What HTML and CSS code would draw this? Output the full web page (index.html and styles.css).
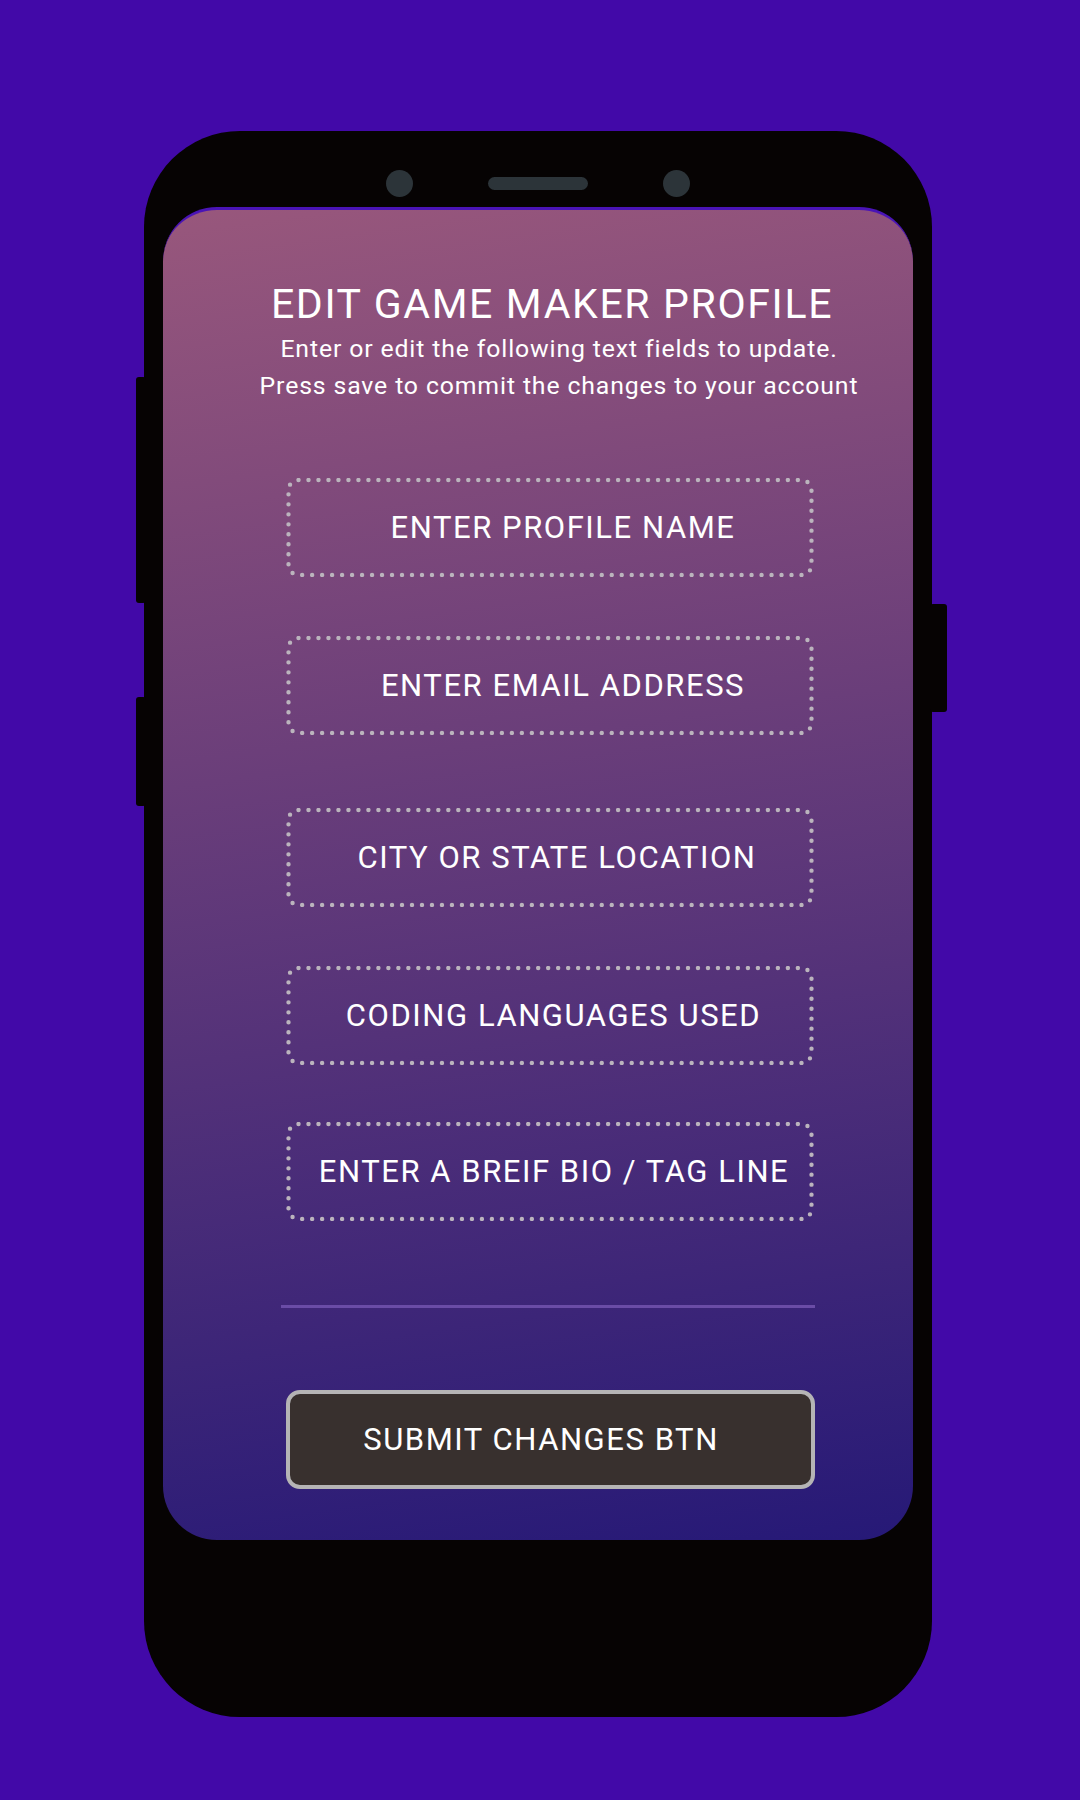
FILE: index.html
```html
<!DOCTYPE html>
<html lang="en">
<head>
<meta charset="utf-8">
<title>Edit Game Maker Profile</title>
<link rel="stylesheet" href="styles.css">
</head>
<body>
<div class="page">
  <div class="phone">
    <span class="side-btn side-btn-1"></span>
    <span class="side-btn side-btn-2"></span>
    <span class="side-btn side-btn-r"></span>
    <div class="phone-top">
      <span class="cam"></span>
      <span class="speaker"></span>
      <span class="cam"></span>
    </div>
    <div class="screen">
      <h1 class="title">EDIT GAME MAKER PROFILE</h1>
      <p class="subtitle">Enter or edit the following text fields to update.<br>Press save to commit the changes to your account</p>
      <div class="fields">
        <div class="field f1">
          <svg class="dots" viewBox="0 0 528 99" preserveAspectRatio="none"><rect x="2.5" y="2" width="523" height="95" rx="10" pathLength="1220"/></svg>
          <span>ENTER PROFILE NAME</span>
        </div>
        <div class="field f2">
          <svg class="dots" viewBox="0 0 528 99" preserveAspectRatio="none"><rect x="2.5" y="2" width="523" height="95" rx="10" pathLength="1220"/></svg>
          <span>ENTER EMAIL ADDRESS</span>
        </div>
        <div class="field f3">
          <svg class="dots" viewBox="0 0 528 99" preserveAspectRatio="none"><rect x="2.5" y="2" width="523" height="95" rx="10" pathLength="1220"/></svg>
          <span>CITY OR STATE LOCATION</span>
        </div>
        <div class="field f4">
          <svg class="dots" viewBox="0 0 528 99" preserveAspectRatio="none"><rect x="2.5" y="2" width="523" height="95" rx="10" pathLength="1220"/></svg>
          <span>CODING LANGUAGES USED</span>
        </div>
        <div class="field f5">
          <svg class="dots" viewBox="0 0 528 99" preserveAspectRatio="none"><rect x="2.5" y="2" width="523" height="95" rx="10" pathLength="1220"/></svg>
          <span>ENTER A BREIF BIO / TAG LINE</span>
        </div>
      </div>
      <div class="divider"></div>
      <button class="submit">SUBMIT CHANGES BTN</button>
    </div>
  </div>
</div>
</body>
</html>
```
FILE: styles.css
```css
html, body {
  margin: 0;
  padding: 0;
  background: #4209a8;
}

.page {
  width: 1080px;
  height: 1800px;
  padding-top: 131px;
  box-sizing: border-box;
  font-family: Roboto, "Liberation Sans", sans-serif;
}

.phone {
  position: relative;
  margin-left: 144px;
  width: 788px;
  height: 1586px;
  background: #060303;
  border-radius: 96px;
}

.side-btn {
  position: absolute;
  background: #060303;
  border-radius: 3px;
}
.side-btn-1 { left: -8px; top: 246px; width: 10px; height: 226px; }
.side-btn-2 { left: -8px; top: 566px; width: 10px; height: 109px; }
.side-btn-r { right: -15px; top: 473px; width: 17px; height: 108px; }

.phone-top {
  height: 76px;
  box-sizing: border-box;
  padding-top: 39px;
  display: flex;
  justify-content: center;
  align-items: flex-start;
  gap: 75px;
}

.cam {
  width: 27px;
  height: 27px;
  border-radius: 50%;
  background: #2c3439;
}

.speaker {
  width: 100px;
  height: 13px;
  margin-top: 7px;
  border-radius: 7px;
  background: #2c3439;
}

.screen {
  margin: 0 19px;
  height: 1333px;
  box-sizing: border-box;
  border-top: 3px solid #4a14b6;
  border-radius: 54px;
  background: linear-gradient(172deg, #98577c 0%, #261977 100%);
  padding: 71px 0 0 24px;
  display: flex;
  flex-direction: column;
  align-items: center;
  color: #ffffff;
}

.title {
  margin: 0 0 0 4px;
  font-size: 41px;
  font-weight: 400;
  line-height: 47px;
  letter-spacing: 0.04em;
  white-space: nowrap;
}

.subtitle {
  margin: 2px 0 0 0;
  padding-left: 18px;
  font-size: 24.8px;
  line-height: 37px;
  letter-spacing: 0.035em;
  text-align: center;
  white-space: nowrap;
}

.fields {
  margin-top: 74px;
  display: flex;
  flex-direction: column;
}

.field {
  position: relative;
  width: 528px;
  height: 99px;
  box-sizing: border-box;
  padding-left: 14px;
  display: flex;
  align-items: center;
  justify-content: center;
  font-size: 31px;
  letter-spacing: 0.05em;
  white-space: nowrap;
}

.f1 { padding-left: 26px; }
.f2 { margin-top: 59px; padding-left: 26px; }
.f3 { margin-top: 73px; }
.f4 { margin-top: 59px; padding-left: 7px; }
.f5 { margin-top: 57px; padding-left: 8px; }

.dots {
  position: absolute;
  inset: 0;
  width: 100%;
  height: 100%;
}
.dots rect {
  fill: none;
  stroke: #bbb4bd;
  stroke-width: 4.4;
  stroke-dasharray: 0 10;
  stroke-linecap: round;
}

.divider {
  margin-top: 84px;
  margin-right: 4px;
  width: 534px;
  height: 3px;
  background: #6a4ca6;
}

.submit {
  margin-top: 82px;
  width: 529px;
  height: 99px;
  box-sizing: border-box;
  border: 4px solid #b5b4b5;
  border-radius: 14px;
  background: #38302e;
  color: #ffffff;
  font-family: Roboto, "Liberation Sans", sans-serif;
  font-size: 31px;
  letter-spacing: 0.05em;
  padding: 0 18px 0 0;
  cursor: pointer;
}
```
